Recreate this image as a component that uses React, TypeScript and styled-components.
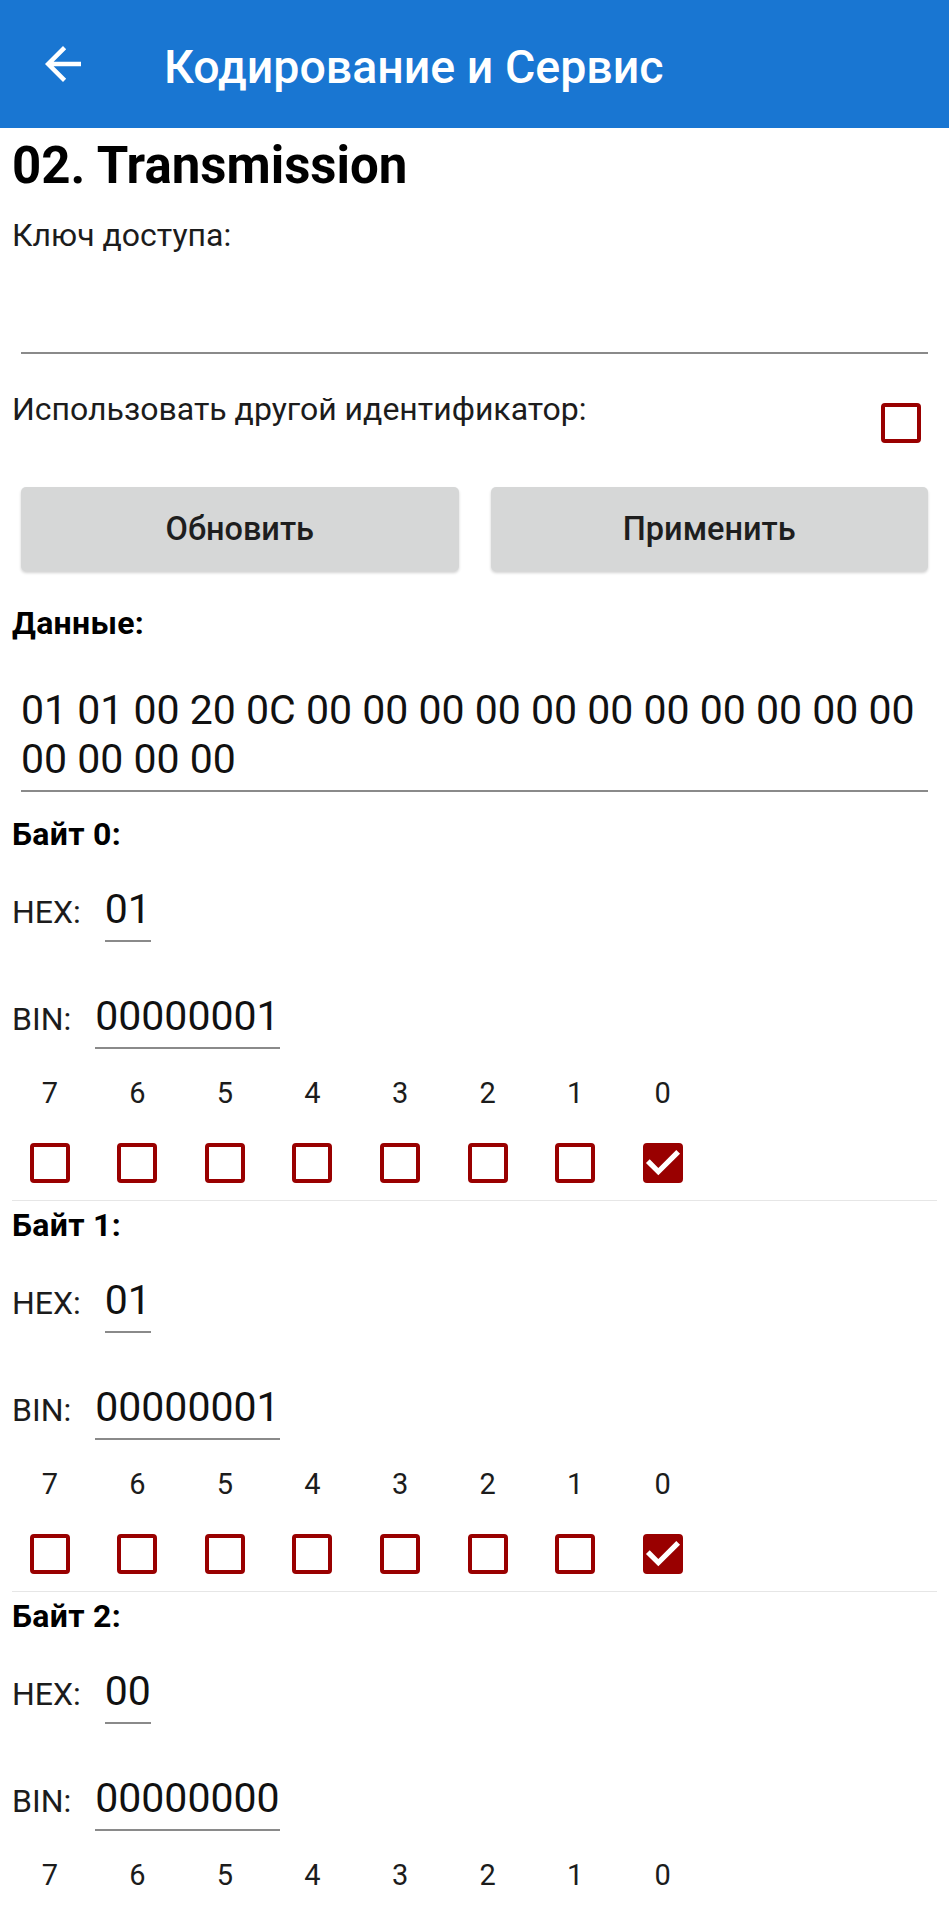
import React from "react";
import styled, { createGlobalStyle } from "styled-components";

const GlobalStyle = createGlobalStyle`
  html, body {
    margin: 0;
    padding: 0;
    background: #ffffff;
  }
  body {
    font-family: Roboto, "Noto Sans", "Liberation Sans", sans-serif;
    color: #1c1c1c;
  }
`;

const DATA =
  "01 01 00 20 0C 00 00 00 00 00 00 00 00 00 00 00 00 00 00 00";

const Page = styled.div`
  width: 949px;
  min-height: 1920px;
  background: #fff;
`;

const AppBar = styled.header`
  height: 128px;
  background: #1976d2;
  display: flex;
  align-items: center;
  padding-left: 36px;
  box-sizing: border-box;
`;

const BackButton = styled.button`
  width: 54px;
  height: 54px;
  padding: 0;
  border: 0;
  background: transparent;
  display: flex;
  color: #fff;
  cursor: pointer;
`;

const AppTitle = styled.h1`
  margin: 5px 0 0 74px;
  font-size: 46.5px;
  line-height: 56px;
  font-weight: 500;
  color: #fff;
`;

const Content = styled.main`
  padding: 0 12px;
`;

const PageTitle = styled.h2`
  margin: 8px 0 0;
  font-size: 51px;
  line-height: 60px;
  font-weight: 700;
  color: #000;
`;

const FieldLabel = styled.div`
  margin-top: 19px;
  font-size: 32px;
  line-height: 40px;
`;

const KeyInput = styled.div`
  margin: 0 9px;
  height: 97px;
  border-bottom: 2px solid #8a8a8a;
`;

const OptionRow = styled.div`
  margin-top: 35px;
  display: flex;
  justify-content: space-between;
  align-items: flex-start;
`;

const OptionText = styled.span`
  font-size: 32px;
  line-height: 40px;
`;

const Box = styled.span<{ $checked: boolean; $mt?: number; $mr?: number }>`
  box-sizing: border-box;
  width: 40px;
  height: 40px;
  border: 4px solid #990000;
  border-radius: 4px;
  background: ${(p) => (p.$checked ? "#990000" : "transparent")};
  margin-top: ${(p) => p.$mt ?? 0}px;
  margin-right: ${(p) => p.$mr ?? 0}px;
  display: flex;
  align-items: center;
  justify-content: center;
  flex-shrink: 0;
  overflow: visible;
`;

const ButtonRow = styled.div`
  margin-top: 44px;
  padding: 0 9px;
  display: flex;
  gap: 32px;
`;

const ActionButton = styled.button`
  flex: 1;
  height: 84px;
  border: 0;
  border-radius: 5px;
  background: #d6d7d7;
  box-shadow: 0 2px 3px rgba(0, 0, 0, 0.18);
  font-family: Roboto, "Noto Sans", sans-serif;
  font-size: 32.5px;
  font-weight: 500;
  color: #1e1e1e;
`;

const SectionTitle = styled.div`
  margin-top: 32px;
  font-size: 32px;
  line-height: 40px;
  font-weight: 700;
  letter-spacing: 0.3px;
  color: #000;
`;

const DataField = styled.div`
  margin: 43px 9px 0;
  font-size: 41px;
  line-height: 49px;
  padding-bottom: 6px;
  border-bottom: 2px solid #8a8a8a;
  color: #111;
`;

const ByteBlock = styled.section<{ $first: boolean }>`
  margin-top: ${(p) => (p.$first ? 18 : 0)}px;
  padding: 4px 0 17px;
  border-bottom: 1px solid #e6e6e6;
`;

const ByteTitle = styled.div`
  font-size: 32px;
  line-height: 40px;
  font-weight: 700;
  letter-spacing: 0.3px;
  color: #000;
`;

const ValueRow = styled.div<{ $mt: number }>`
  margin-top: ${(p) => p.$mt}px;
  display: flex;
  align-items: baseline;
`;

const ValueLabel = styled.span`
  font-size: 32px;
  line-height: 40px;
`;

const ValueField = styled.span`
  margin-left: 24px;
  font-size: 41px;
  line-height: 49px;
  padding-bottom: 6px;
  border-bottom: 2px solid #8a8a8a;
  color: #111;
`;

const BitsGrid = styled.div`
  margin: 24px 0 0 -6px;
  display: grid;
  grid-template-columns: repeat(8, 87.57px);
`;

const BitCell = styled.div`
  display: flex;
  flex-direction: column;
  align-items: center;
`;

const BitLabel = styled.span`
  font-size: 29px;
  line-height: 40px;
`;

const Check = ({
  checked,
  mt,
  mr,
}: {
  checked: boolean;
  mt?: number;
  mr?: number;
}) => (
  <Box $checked={checked} $mt={mt} $mr={mr}>
    {checked && (
      <svg
        width="42"
        height="42"
        viewBox="3 3 18 18"
        style={{ flexShrink: 0 }}
      >
        <path
          d="M10 17.3l-5.3-5.3 1.6-1.6 3.7 3.7 7.7-7.7 1.6 1.6z"
          fill="#fff"
        />
      </svg>
    )}
  </Box>
);

const ByteView = ({ index, hex }: { index: number; hex: string }) => {
  const value = parseInt(hex, 16);
  const bin = value.toString(2).padStart(8, "0");
  return (
    <ByteBlock $first={index === 0}>
      <ByteTitle>Байт {index}:</ByteTitle>
      <ValueRow $mt={31}>
        <ValueLabel>HEX:</ValueLabel>
        <ValueField>{hex}</ValueField>
      </ValueRow>
      <ValueRow $mt={50}>
        <ValueLabel>BIN:</ValueLabel>
        <ValueField>{bin}</ValueField>
      </ValueRow>
      <BitsGrid>
        {[7, 6, 5, 4, 3, 2, 1, 0].map((bit) => (
          <BitCell key={bit}>
            <BitLabel>{bit}</BitLabel>
            <Check checked={((value >> bit) & 1) === 1} mt={30} />
          </BitCell>
        ))}
      </BitsGrid>
    </ByteBlock>
  );
};

export default function App() {
  const bytes = DATA.split(" ");
  return (
    <>
      <GlobalStyle />
      <Page>
        <AppBar>
          <BackButton aria-label="Назад">
            <svg width="54" height="54" viewBox="0 0 24 24">
              <path
                d="M20 11H7.83l5.59-5.59L12 4l-8 8 8 8 1.41-1.41L7.83 13H20v-2z"
                fill="currentColor"
              />
            </svg>
          </BackButton>
          <AppTitle>Кодирование и Сервис</AppTitle>
        </AppBar>
        <Content>
          <PageTitle>02. Transmission</PageTitle>
          <FieldLabel>Ключ доступа:</FieldLabel>
          <KeyInput />
          <OptionRow>
            <OptionText>Использовать другой идентификатор:</OptionText>
            <Check checked={false} mt={14} mr={16} />
          </OptionRow>
          <ButtonRow>
            <ActionButton>Обновить</ActionButton>
            <ActionButton>Применить</ActionButton>
          </ButtonRow>
          <SectionTitle>Данные:</SectionTitle>
          <DataField>{DATA}</DataField>
          {bytes.map((hex, i) => (
            <ByteView key={i} index={i} hex={hex} />
          ))}
        </Content>
      </Page>
    </>
  );
}
